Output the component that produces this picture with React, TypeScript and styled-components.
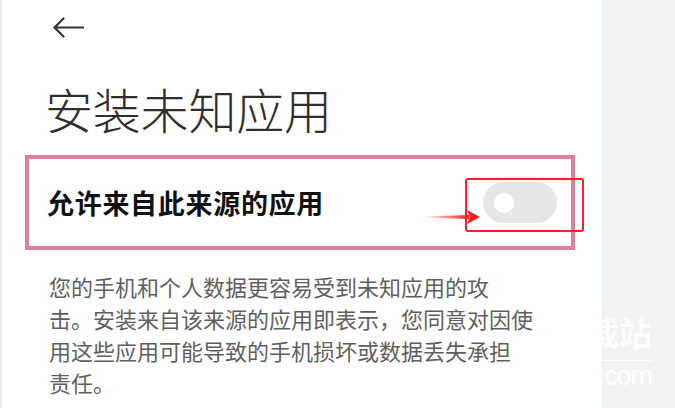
import { createGlobalStyle, styled } from 'styled-components';

const GlobalStyle = createGlobalStyle`
  html, body {
    margin: 0;
    padding: 0;
    background: #ffffff;
  }
  body {
    font-family: "Noto Sans CJK SC", "Noto Sans", sans-serif;
  }
`;

const Page = styled.div`
  position: relative;
  display: flex;
  width: 675px;
  height: 408px;
  overflow: hidden;
`;

const Screen = styled.div`
  width: 600px;
  border-left: 2px solid #eceef0;
  background: #ffffff;
  display: flex;
  flex-direction: column;
`;

const Side = styled.div`
  flex: 1;
  background: #f1f2f4;
`;

const BackButton = styled.div`
  margin: 17px 0 0 50px;
  width: 32px;
  height: 21px;
  display: flex;
  align-items: center;
`;

const Title = styled.h1`
  margin: 40px 0 0 43px;
  font-size: 48px;
  line-height: 60px;
  font-weight: 300;
  color: #2e2e2e;
  letter-spacing: -0.2px;
`;

const Row = styled.div`
  position: relative;
  margin: 17px 0 0 23px;
  width: 550px;
  height: 95px;
  box-sizing: border-box;
  border: 4px solid #df7e9b;
  padding: 0 14px 0 18px;
  display: flex;
  align-items: center;
  justify-content: space-between;
`;

const RowLabel = styled.span`
  font-size: 27px;
  font-weight: 700;
  color: #111111;
  letter-spacing: 0.7px;
`;

const Toggle = styled.div`
  position: relative;
  width: 74px;
  height: 41px;
  border-radius: 21px;
  background: #e6e6e6;
  display: flex;
  align-items: center;
  padding-left: 11px;
  box-sizing: border-box;
`;

const Knob = styled.div`
  width: 20px;
  height: 20px;
  border-radius: 50%;
  background: #ffffff;
`;

const Highlight = styled.div`
  position: absolute;
  left: -18px;
  top: -4px;
  right: -27px;
  bottom: -9px;
  border: 2.5px solid #ff2121;
  border-radius: 3px;
`;

const Pointer = styled.svg`
  position: absolute;
  left: -60px;
  top: 27px;
`;

const Description = styled.p`
  margin: 20px 0 0 47px;
  font-size: 22px;
  line-height: 32px;
  color: #5f5f5f;
  white-space: nowrap;
`;

const Watermark = styled.div`
  position: absolute;
  left: 553px;
  top: 308px;
  display: flex;
  flex-direction: column;
  align-items: flex-end;
  color: rgba(255, 255, 255, 0.9);
`;

const MarkTitle = styled.span`
  font-size: 33px;
  line-height: 48px;
  font-weight: 700;
  padding-bottom: 4px;
  border-bottom: 1.5px solid rgba(255, 255, 255, 0.9);
`;

const MarkSite = styled.span`
  font-family: "Liberation Sans", Arial, sans-serif;
  font-size: 27px;
  line-height: 30px;
  letter-spacing: -1px;
`;

export default function App() {
  return (
    <>
      <GlobalStyle />
      <Page>
        <Screen>
          <BackButton>
            <svg width="32" height="21" viewBox="0 0 32 21">
              <path
                d="M31 10.5H2.5M11.5 1.5L2.5 10.5L11.5 19.5"
                fill="none"
                stroke="#333"
                strokeWidth="2.2"
                strokeLinecap="round"
                strokeLinejoin="round"
              />
            </svg>
          </BackButton>
          <Title>安装未知应用</Title>
          <Row>
            <RowLabel>允许来自此来源的应用</RowLabel>
            <Toggle>
              <Knob />
              <Highlight />
              <Pointer width="58" height="16" viewBox="0 0 58 16">
                <defs>
                  <linearGradient id="tail" x1="0" x2="1" y1="0" y2="0">
                    <stop offset="0" stopColor="#ff2020" stopOpacity="0" />
                    <stop offset="1" stopColor="#ff2020" stopOpacity="1" />
                  </linearGradient>
                </defs>
                <polygon points="0,7.5 46,6 46,10 0,8.5" fill="url(#tail)" />
                <polygon points="44,1 57,8 44,15 47,8" fill="#ff1f1f" />
              </Pointer>
            </Toggle>
          </Row>
          <Description>
            您的手机和个人数据更容易受到未知应用的攻
            <br />
            击。安装来自该来源的应用即表示，您同意对因使
            <br />
            用这些应用可能导致的手机损坏或数据丢失承担
            <br />
            责任。
          </Description>
        </Screen>
        <Side />
        <Watermark>
          <MarkTitle>下载站</MarkTitle>
          <MarkSite>.com</MarkSite>
        </Watermark>
      </Page>
    </>
  );
}
